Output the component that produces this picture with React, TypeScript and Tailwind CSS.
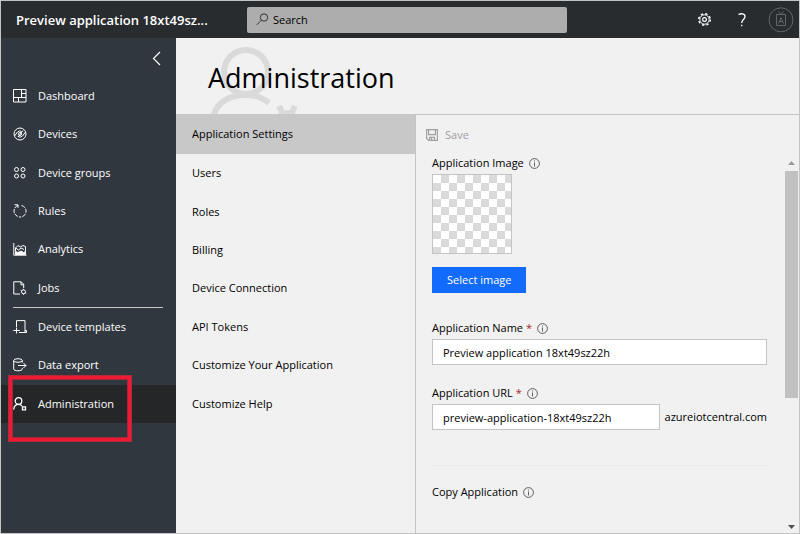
import type { ReactNode } from "react";

function Icon({ children, size = 14 }: { children: ReactNode; size?: number }) {
  return (
    <svg width={size} height={size} viewBox="0 0 14 14" fill="none" stroke="currentColor" strokeWidth="1" className="shrink-0" aria-hidden="true">
      {children}
    </svg>
  );
}

const icons = {
  dashboard: <path d="M.5.5h12.5v12.5H.5zM8.5.5v8M.5 8.5h12.5M8.5 4.5h4.5M5.5 8.5v4.5" />,
  devices: (
    <>
      <circle cx="7" cy="7" r="6" />
      <path d="M1.500 9 4.500 5Q7 3 8.500 4.500M12.500 5 9.500 9Q7 11 5 9.500M10 3.500 5 10" />
      <circle cx="7" cy="7" r="1.500" />
    </>
  ),
  groups: (
    <>
      <circle cx="3.500" cy="3.500" r="2" />
      <circle cx="10" cy="3.500" r="2" />
      <circle cx="3.500" cy="10" r="2" />
      <circle cx="10" cy="10" r="2" />
    </>
  ),
  rules: (
    <>
      <path d="M5 1.500A5.800 5.800 0 0 0 5 12.500" strokeDasharray="4 1" />
      <path d="M8.500 1.500A5.800 5.800 0 0 1 6 12.900" strokeDasharray="4 1.200" />
      <path d="M1.500.8H5v3" />
    </>
  ),
  analytics: (
    <>
      <path d="M.8 1v12.200H13.500" />
      <path d="M2.500 12.500V9.500L5 10.500l3-1.500 2.500 1.500 2-1v3z" fill="currentColor" />
      <path d="M2.500 6 5 3.500 7.500 5 10 3.500l2.500 1V9M2.500 9V6l3 2L8 6l3 1.500" />
    </>
  ),
  jobs: (
    <>
      <path d="M7 13H.8V.8h7.400l2.500 2.500V7M8 .8v3h3" />
      <circle cx="10.500" cy="10.800" r="2" />
      <path d="M10.500 7.800v1M10.500 12.800v1M7.700 9.300l1 .5M12.300 11.800l1 .5" />
    </>
  ),
  templates: (
    <>
      <path d="M3.500 7V.6h8.500v9.400M6 12.500h6v-2.500" />
      <path d="M3.500 7.500v6M.3 10.500h6.500M12 10.500h1.500v2H9" />
    </>
  ),
  exporter: (
    <>
      <ellipse cx="5" cy="2.500" rx="4.300" ry="1.800" />
      <path d="M.7 2.500v8.500c0 1 2 1.800 4.300 1.800s4.300-.8 4.300-1.800v-1M9.300 2.500v2M5 7.500h8M10.500 5l2.500 2.500-2.500 2.500" />
    </>
  ),
  admin: (
    <>
      <circle cx="5.500" cy="4" r="3.300" strokeWidth="1.300" />
      <path d="M.7 12.500C1 9 3 7.300 5.500 7.300c1.500 0 2.700.7 3.500 1.700" strokeWidth="1.300" />
      <path d="M9.500 9.800h3v3h-3z" strokeWidth="1.300" />
    </>
  ),
};

const primary = [
  { label: "Dashboard", icon: icons.dashboard },
  { label: "Devices", icon: icons.devices },
  { label: "Device groups", icon: icons.groups },
  { label: "Rules", icon: icons.rules },
  { label: "Analytics", icon: icons.analytics },
  { label: "Jobs", icon: icons.jobs },
];

const secondary = [
  { label: "Device templates", icon: icons.templates },
  { label: "Data export", icon: icons.exporter },
  { label: "Administration", icon: icons.admin, active: true },
];

const sections = ["Users", "Roles", "Billing", "Device Connection", "API Tokens", "Customize Your Application", "Customize Help"];

function NavItem({ label, icon, active }: { label: string; icon: ReactNode; active?: boolean }) {
  return (
    <li className={active ? "relative flex flex-1 bg-[#252627]" : "flex flex-1"}>
      <a href="#" aria-current={active ? "page" : undefined} className="flex flex-1 items-center gap-[11px] pl-3">
        <Icon>{icon}</Icon>
        {label}
      </a>
      {active && (
        <span className="pointer-events-none absolute -top-[9px] left-2 z-10 h-[65px] w-[122px] border-[3px] border-[#ed1a34] shadow-[0_0_0_1px_#b4283c,inset_0_0_0_1px_#a3263a]" />
      )}
    </li>
  );
}

function Info() {
  return (
    <button type="button" aria-label="More information" className="text-[#505050]">
      <svg width="11" height="11" viewBox="0 0 11 11" fill="none" stroke="currentColor" className="block">
        <circle cx="5.500" cy="5.500" r="4.900" strokeWidth=".9" />
        <path d="M5.500 4.500v4M5.500 2.500v1" strokeWidth=".9" />
      </svg>
    </button>
  );
}

function Label({ text, htmlFor, required }: { text: string; htmlFor?: string; required?: boolean }) {
  return (
    <div className="flex h-4 items-center gap-[5px]">
      <label htmlFor={htmlFor}>
        {text}
        {required && <span className="text-[#a4262c]"> *</span>}
      </label>
      <Info />
    </div>
  );
}

export default function App() {
  return (
    <div className="flex h-screen flex-col overflow-hidden border border-[#c4c4c4] bg-[#f1f1f1] font-['Open_Sans','Noto_Sans',sans-serif] text-[11px] leading-4 text-black">
      <header className="flex h-[37px] shrink-0 items-center bg-[#282c2f] text-white">
        <div className="w-[246px] shrink-0 pl-[15px] text-[13px] font-semibold">Preview application 18xt49sz...</div>
        <div className="flex h-[26px] w-80 items-center gap-1 rounded-xs bg-[#adadad] px-[9px] text-black">
          <svg width="13" height="13" viewBox="0 0 13 13" fill="none" stroke="#333" className="shrink-0">
            <circle cx="8" cy="4.500" r="3.700" />
            <path d="M5.300 7.300.8 11.800" />
          </svg>
          <input type="search" aria-label="Search" placeholder="Search" className="min-w-0 flex-1 bg-transparent outline-none placeholder:text-black" />
        </div>
        <div className="ml-auto flex items-center pr-[5px]">
          <button type="button" aria-label="Settings" className="mr-[25px]">
            <svg width="15" height="15" viewBox="0 0 15 15" fill="none" stroke="currentColor" className="block">
              <circle cx="7.500" cy="7.500" r="1.900" strokeWidth="1.200" />
              <circle cx="7.500" cy="7.500" r="4.700" strokeWidth="1" />
              <circle cx="7.500" cy="7.500" r="5.800" strokeWidth="1.400" strokeDasharray="2.400 2.155" />
            </svg>
          </button>
          <button type="button" aria-label="Help" className="mr-[21px]">
            <svg width="10" height="14" viewBox="0 0 10 14" fill="none" stroke="currentColor" strokeWidth="1.300" className="block">
              <path d="M1.500 1.500C4 .2 8 .5 8 3.500 8 6.500 4.700 6.500 4.700 10M4.700 11.800v1.500" />
            </svg>
          </button>
          <button type="button" aria-label="Account" className="text-[#646668]">
            <svg width="26" height="26" viewBox="0 0 26 26" fill="none" stroke="currentColor" className="block">
              <circle cx="13" cy="12.800" r="12" />
              <path d="M8.500 7.500h9v11h-9zM10.500 4.500l2.500 3 2.500-3M10.500 16.500l2.500-6 2.500 6M11.300 14.500h3.400" />
            </svg>
          </button>
        </div>
      </header>

      <div className="flex min-h-0 flex-1">
        <nav aria-label="Main" className="w-[175px] shrink-0 bg-[#30373f] text-white">
          <div className="flex h-[39px] justify-end pt-3 pr-[15px]">
            <button type="button" aria-label="Collapse menu" className="h-4">
              <svg width="9" height="15" viewBox="0 0 9 15" fill="none" stroke="currentColor" strokeWidth="1.200" className="block">
                <path d="M8 1 1.500 7.500 8 14" />
              </svg>
            </button>
          </div>
          <ul className="flex h-[230px] flex-col">
            {primary.map((item) => (
              <NavItem key={item.label} {...item} />
            ))}
          </ul>
          <hr className="mr-[13px] ml-3 border-[#c8c8c8]" />
          <ul className="flex h-[115px] flex-col">
            {secondary.map((item) => (
              <NavItem key={item.label} {...item} />
            ))}
          </ul>
        </nav>

        <main className="flex min-w-0 flex-1 flex-col">
          <div className="relative h-[76px] shrink-0 overflow-hidden pt-5 pl-8">
            <svg width="100" height="76" viewBox="0 0 100 76" fill="none" stroke="#dadada" strokeWidth="6" className="absolute top-0 left-[30px]" aria-hidden="true">
              <circle cx="40" cy="34" r="22" />
              <path d="M7 80C10 64 24 57 40 57c9 0 17 3 23 8" />
              <circle cx="81" cy="84" r="9" />
              <path d="m77 76-4-8M85 76l4-8" />
            </svg>
            <h1 className="relative text-[27px] leading-10">Administration</h1>
          </div>
          <div className="flex min-h-0 flex-1">
            <nav aria-label="Administration" className="w-60 shrink-0 border-r border-[#c4c4c4]">
              <a href="#" aria-current="page" className="flex h-10 items-center bg-[#c8c8c8] pl-4">
                Application Settings
              </a>
              <ul className="flex h-[269px] flex-col">
                {sections.map((label) => (
                  <li key={label} className="flex flex-1">
                    <a href="#" className="flex flex-1 items-center pl-4">
                      {label}
                    </a>
                  </li>
                ))}
              </ul>
            </nav>

            <section className="flex min-w-0 flex-1 flex-col border-t border-[#c4c4c4]">
              <div className="flex h-10 shrink-0 items-center pl-[10px]">
                <button type="button" disabled className="flex items-center gap-[7px] text-[#a0a0a0]">
                  <svg width="12" height="12" viewBox="0 0 12 12" fill="none" stroke="currentColor" strokeWidth="1.200">
                    <path d="M.6.6h10.800v10.800H2.500L.6 9.500zM2.600.6v5h6.800v-5M3.500 11.400V8.300h5v3.100M5.500 9v2" />
                  </svg>
                  Save
                </button>
              </div>
              <div className="flex min-h-0 flex-1">
                <form className="min-w-0 flex-1 overflow-hidden pr-[18px] pl-4">
                  <Label text="Application Image" />
                  <div className="mt-[3px] size-20 border border-[#c4c4c4] bg-white bg-[conic-gradient(#dadada_25%,#fff_0_50%,#dadada_0_75%,#fff_0)] bg-size-[16px_16px]" />
                  <button type="button" className="mt-[13px] block h-[26px] bg-[#136bfb] px-[15px] text-white">
                    Select image
                  </button>
                  <div className="mt-[27px]">
                    <Label text="Application Name" htmlFor="app-name" required />
                    <input id="app-name" defaultValue="Preview application 18xt49sz22h" className="mt-[3px] block h-[26px] w-full border border-[#c4c4c4] bg-white px-[10px]" />
                  </div>
                  <div className="mt-5">
                    <Label text="Application URL" htmlFor="app-url" required />
                    <div className="mt-[3px] flex items-center gap-[5px]">
                      <input id="app-url" defaultValue="preview-application-18xt49sz22h" className="h-[26px] min-w-0 flex-1 border border-[#c4c4c4] bg-white px-[10px]" />
                      <span>azureiotcentral.com</span>
                    </div>
                  </div>
                  <hr className="mt-[35px] mb-[18px] border-[#ebebeb]" />
                  <Label text="Copy Application" />
                </form>
                <div className="flex w-[14px] shrink-0 flex-col items-center pt-[6px] pr-px pb-1" aria-hidden="true">
                  <svg width="7" height="4" viewBox="0 0 7 4" fill="#9a9a9a" className="shrink-0">
                    <path d="M3.500 0 7 4H0z" />
                  </svg>
                  <div className="mt-[6px] h-[227px] w-[13px] shrink-0 bg-[#c1c1c1]" />
                  <svg width="7" height="4" viewBox="0 0 7 4" fill="#505050" className="mt-auto shrink-0">
                    <path d="M0 0h7L3.500 4z" />
                  </svg>
                </div>
              </div>
            </section>
          </div>
        </main>
      </div>
    </div>
  );
}
